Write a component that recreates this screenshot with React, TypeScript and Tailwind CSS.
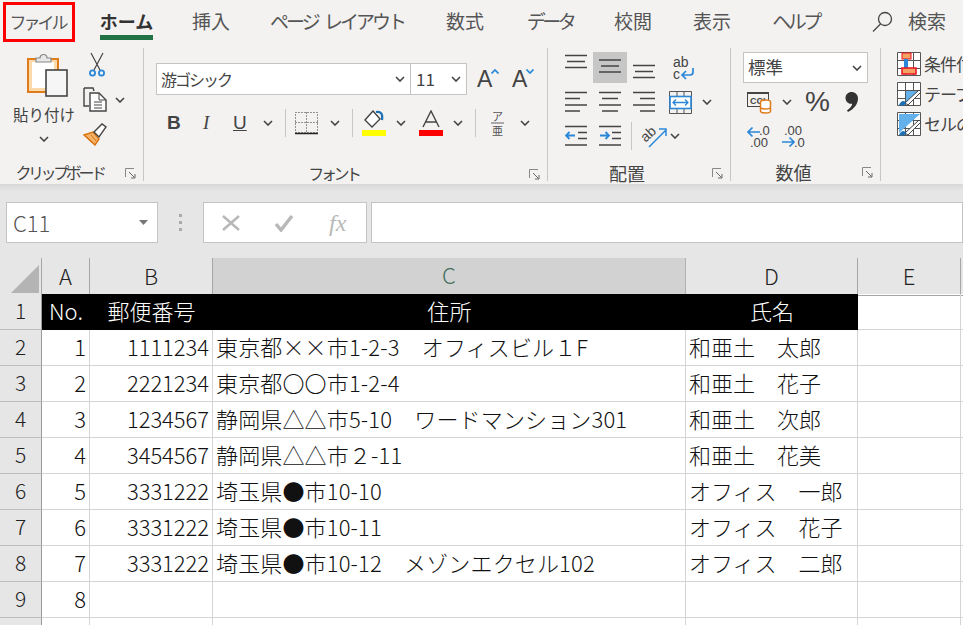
import React from "react";

const jp = '"Noto Sans CJK JP", "Noto Sans", sans-serif';

function Chev({ className = "" }: { className?: string }) {
  return (
    <svg width="10" height="6" viewBox="0 0 10 6" className={`shrink-0 ${className}`}>
      <path d="M1 1l4 4 4-4" fill="none" stroke="#444" strokeWidth="1.6" />
    </svg>
  );
}

function Sep({ h = 28 }: { h?: number }) {
  return <div className="w-px bg-[#c8c6c4]" style={{ height: h }} />;
}

function Launcher() {
  return (
    <svg width="11" height="11" viewBox="0 0 11 11">
      <path d="M.5 9V.5H9" fill="none" stroke="#8a8886" />
      <path d="M4 4l5.5 5.5M10 6v4H6" fill="none" stroke="#666" />
    </svg>
  );
}

function GroupLabel({ text, kanji = false, w }: { text: string; kanji?: boolean; w: number }) {
  return (
    <div className="flex items-center h-[22px] relative pr-[24px]" style={{ width: w }}>
      <span className={`w-full text-center whitespace-nowrap text-[#444] ${kanji ? "text-[18px]" : "text-[16px] tracking-[-3.400px] -mt-[2px]"}`}>{text}</span>
      <span className="absolute right-[7px] top-[6px] flex">
        <Launcher />
      </span>
    </div>
  );
}

function VLines({ ys }: { ys: number[] }) {
  return (
    <svg width="22" height="31" viewBox="0 0 22 31" className="shrink-0">
      <path d={`M0 ${ys[0]}H22M2 ${ys[1]}H20M0 ${ys[2]}H22`} stroke="#444" strokeWidth="1.4" fill="none" />
    </svg>
  );
}

function HLines({ kind }: { kind: "left" | "center" | "right" }) {
  const [a, b] = kind === "left" ? [0, 15] : kind === "center" ? [3, 19] : [7, 22];
  return (
    <svg width="22" height="22" viewBox="0 0 22 22" className="shrink-0">
      <path d={`M0 1.5H22M${a} 7.5H${b}M0 14H22M${a} 20H${b}`} stroke="#444" strokeWidth="1.4" fill="none" />
    </svg>
  );
}

function Paste() {
  return (
    <svg width="44" height="46" viewBox="0 0 44 46">
      <rect x="2" y="7" width="30" height="33" fill="#fbd9a8" stroke="#e07b1a" strokeWidth="2" />
      <rect x="6" y="10" width="22" height="26" fill="#fff" />
      <path d="M10 10V6h4a3.500 3.500 0 0 1 7 0h4v4z" fill="#e8e8e8" stroke="#888" strokeWidth="1.2" />
      <rect x="20" y="18" width="21" height="26" fill="#f6f6f6" stroke="#444" strokeWidth="1.6" />
    </svg>
  );
}

function Scissors() {
  return (
    <svg width="18" height="26" viewBox="0 0 18 26">
      <path d="M3 1l9 17M15 1L6 18" stroke="#444" strokeWidth="1.2" fill="none" />
      <circle cx="4.500" cy="21" r="2.600" fill="none" stroke="#2b88d8" strokeWidth="1.800" />
      <circle cx="13.500" cy="21" r="2.600" fill="none" stroke="#2b88d8" strokeWidth="1.800" />
    </svg>
  );
}

function Copy() {
  return (
    <svg width="25" height="25" viewBox="0 0 25 25">
      <path d="M1 1h9l1 3M1 1v18h5" fill="none" stroke="#444" strokeWidth="1.400" />
      <path d="M7 6h9l7 7v11H7z" fill="#fff" stroke="#444" strokeWidth="1.400" />
      <path d="M16 6v7h7M11 15h8M11 18h8M11 21h8" fill="none" stroke="#444" />
    </svg>
  );
}

function Brush() {
  return (
    <svg width="25" height="23" viewBox="0 0 25 23">
      <path d="M1 12l9-3 6 7-4 6z" fill="#f4b26a" stroke="#d9730d" strokeWidth="1.400" />
      <path d="M11 9l8-8 4 3-7 10z" fill="#fff" stroke="#444" strokeWidth="1.400" />
      <path d="M4 14l5 6M8 12l5 6" stroke="#d9730d" />
    </svg>
  );
}

function GrowFont({ up }: { up: boolean }) {
  return (
    <div className="flex items-start w-[21px] h-[26px]">
      <span className="text-[23px] leading-[26px] text-[#444]" style={{ fontFamily: '"Liberation Sans", sans-serif' }}>A</span>
      <svg width="8" height="5" viewBox="0 0 8 5" className="mt-[3px] -ml-px shrink-0">
        <path d={up ? "M0.500 4.500L4 1l3.500 3.500" : "M0.500 0.500L4 4l3.500-3.500"} stroke="#2b88d8" strokeWidth="1.700" fill="none" />
      </svg>
    </div>
  );
}

function Borders() {
  return (
    <svg width="23" height="24" viewBox="0 0 23 24">
      <path d="M.5 1.500h22v20H.5zM11.500 1.500v20M.5 11.500h22" fill="none" stroke="#333" strokeDasharray="1 2" />
      <path d="M0 22.500h23" stroke="#222" strokeWidth="1.500" />
    </svg>
  );
}

function Fill() {
  return (
    <svg width="25" height="26" viewBox="0 0 25 26">
      <path d="M11 1l-8 9 7 7 8-8z" fill="#fff" stroke="#444" strokeWidth="1.400" />
      <path d="M14 2c5-1 7 2 6 8" fill="none" stroke="#1a6fb5" strokeWidth="2.200" />
      <rect x="0" y="20" width="24" height="6" fill="#ffff00" />
    </svg>
  );
}

function FontColor() {
  return (
    <svg width="25" height="26" viewBox="0 0 25 26">
      <path d="M4 17L12 1l8 16M7 12h10" fill="none" stroke="#444" strokeWidth="1.400" />
      <rect x="0" y="20" width="24" height="6" fill="#ff0000" />
    </svg>
  );
}

function Ruby() {
  return (
    <div className="flex flex-col items-center w-[13px] text-[#555] text-[11px] leading-[11px]">
      <span>ア</span>
      <span className="w-full h-[2px] bg-[#aaa]" />
      <span className="mt-[1px]">亜</span>
    </div>
  );
}

function Indent({ right }: { right: boolean }) {
  return (
    <svg width="23" height="22" viewBox="0 0 23 22" className="shrink-0">
      <path d="M0 1.500h22M13 7.500h9M13 13.500h9M0 20h22" stroke="#444" strokeWidth="1.400" />
      {right ? (
        <path d="M1 10.500h9M6.500 7l3.500 3.500L6.500 14" fill="none" stroke="#2b88d8" strokeWidth="1.800" />
      ) : (
        <path d="M10 10.500H1M4.500 7L1 10.500 4.500 14" fill="none" stroke="#2b88d8" strokeWidth="1.800" />
      )}
    </svg>
  );
}

function Wrap() {
  return (
    <svg width="23" height="24" viewBox="0 0 23 24" className="shrink-0" style={{ fontFamily: '"Liberation Sans", sans-serif' }}>
      <text x="1" y="11" fontSize="14" fill="#444">ab</text>
      <text x="1" y="23" fontSize="14" fill="#444">c</text>
      <path d="M21 12v4a3 3 0 0 1-3 3h-7M14 15l-4 4 4 4" fill="none" stroke="#2b88d8" strokeWidth="1.700" />
    </svg>
  );
}

function Merge() {
  return (
    <svg width="23" height="23" viewBox="0 0 23 23" className="shrink-0">
      <path d="M.5.500h22v22H.5zM8 0v6M15 0v6M8 17v6M15 17v6" fill="none" stroke="#555" />
      <rect x="1" y="5.500" width="21" height="12" fill="#fff" stroke="#2b88d8" strokeWidth="1.600" />
      <path d="M4 11.500h15M7 8.500l-3 3 3 3M16 8.500l3 3-3 3" fill="none" stroke="#2b88d8" strokeWidth="1.300" />
    </svg>
  );
}

function Orient() {
  return (
    <svg width="26" height="24" viewBox="0 0 26 24" className="shrink-0" style={{ fontFamily: '"Liberation Sans", sans-serif' }}>
      <text x="0" y="15" fontSize="14" fill="#444" transform="rotate(-42 7 11)">ab</text>
      <path d="M8 23L25 6M18 5h7v7" fill="none" stroke="#2b88d8" strokeWidth="1.500" />
    </svg>
  );
}

function Acct() {
  return (
    <svg width="25" height="24" viewBox="0 0 25 24" className="shrink-0" style={{ fontFamily: '"Liberation Sans", sans-serif' }}>
      <rect x="0.500" y="2.500" width="21" height="14" fill="#f3f2f1" stroke="#444" />
      <rect x="0" y="2" width="22" height="2" fill="#444" />
      <text x="3" y="13.500" fontSize="9" fontWeight="bold" fill="#444">CCI</text>
      <ellipse cx="18.500" cy="12" rx="5" ry="2" fill="#fff" stroke="#e07b1a" strokeWidth="1.500" />
      <path d="M13.500 12v9c0 1 2 2 5 2s5-1 5-2v-9M13.500 17c0 1 2 2 5 2s5-1 5-2" fill="#fff" stroke="#e07b1a" strokeWidth="1.500" />
    </svg>
  );
}

function Comma() {
  return (
    <svg width="13" height="20" viewBox="0 0 13 20" className="shrink-0">
      <path d="M6.500 0C10 0 13 2.500 13 6.500 13 12 9 17 3 20L2 18.500c3-2 5-4.500 5.200-6.700C3.500 12.300 0.500 9.500 0.500 6 0.500 2.500 3.200 0 6.500 0z" fill="#333" />
    </svg>
  );
}

function Decimal({ inc }: { inc: boolean }) {
  return (
    <svg width="24" height="22" viewBox="0 0 24 22" className="shrink-0" style={{ fontFamily: '"Liberation Sans", sans-serif' }}>
      {inc ? (
        <>
          <path d="M13 7H1M5.500 2.500L1 7l4.500 4.500" fill="none" stroke="#2b88d8" strokeWidth="1.700" />
          <text x="12" y="10" fontSize="13" fill="#444">.0</text>
          <text x="3" y="22" fontSize="13" fill="#444">.00</text>
        </>
      ) : (
        <>
          <text x="3" y="10" fontSize="13" fill="#444">.00</text>
          <path d="M1 17h12M8.500 12.500L13 17l-4.500 4.500" fill="none" stroke="#2b88d8" strokeWidth="1.700" />
          <text x="13" y="22" fontSize="13" fill="#444">.0</text>
        </>
      )}
    </svg>
  );
}

function CondIcon({ variant }: { variant: number }) {
  return (
    <svg width="24" height="24" viewBox="0 0 24 24" className="shrink-0">
      <path d="M.5.500h23v23H.5zM.5 8.500h23M.5 16.500h23M8.500.500v23M16.500.500v23" fill="#fff" stroke="#555" />
      {variant === 0 ? (
        <>
          <rect x="5" y="1" width="9" height="6" fill="#f4a261" stroke="#e81123" />
          <rect x="7" y="7" width="4" height="11" fill="#2b88d8" />
          <rect x="5" y="16" width="14" height="6" fill="#f4a261" stroke="#e81123" strokeWidth="1.500" />
        </>
      ) : (
        <>
          <path d={variant === 1 ? "M9 9h14L9 21z" : "M2 2h21L2 21z"} fill="#63b0ea" />
          <path d="M8 21l14-13 2 2-13 13z" fill="#fff" stroke="#444" />
          <path d="M2 23c2-5 6-5 7-2-1 3-5 3-7 2z" fill="#1a6fb5" />
        </>
      )}
    </svg>
  );
}

function Tab({ children, ml, bold = false, w }: { children: React.ReactNode; ml: number; bold?: boolean; w: number }) {
  return (
    <div className="relative flex flex-col items-center h-[44px] shrink-0" style={{ marginLeft: ml, width: w }}>
      <span className={`leading-[42px] whitespace-nowrap ${bold ? "text-[18px] font-bold text-[#333]" : "text-[19px] text-[#555]"}`}>{children}</span>
      {bold && <span className="absolute top-[35px] left-0 right-0 h-[5px] bg-[#217346]" />}
    </div>
  );
}

function Ribbon() {
  return (
    <div className="h-[140px] flex">
      {/* clipboard */}
      <div className="w-[143px] flex flex-col shrink-0 pt-[8px]">
        <div className="h-[106px] flex">
          <div className="w-[88px] flex flex-col items-center shrink-0">
            <div className="ml-[7px] h-[46px]"><Paste /></div>
            <span className="text-[15.500px] leading-[20px] mt-[6px] text-[#444] whitespace-nowrap">貼り付け</span>
            <Chev className="mt-[12px]" />
          </div>
          <div className="flex flex-col -ml-[5px]">
            <div className="ml-[5px] h-[26px]"><Scissors /></div>
            <div className="flex items-center mt-[9px]"><Copy /><Chev className="ml-[7px]" /></div>
            <div className="mt-[11px]"><Brush /></div>
          </div>
        </div>
        <div className="mt-[8px]"><GroupLabel text="クリップボード" w={143} /></div>
      </div>
      <div className="w-px h-[133px] mt-[4px] bg-[#c8c6c4] shrink-0" />
      {/* font */}
      <div className="w-[403px] flex flex-col shrink-0 pt-[19px]">
        <div className="flex items-center h-[32px] pl-[12px]">
          <div className="w-[255px] h-[32px] border-[1.500px] border-[#c4c4c4] bg-white flex items-center justify-between pl-[4px] pr-[5px]">
            <span className="text-[16px] text-[#444] tracking-[-2px]">游ゴシック</span>
            <Chev />
          </div>
          <div className="w-[57px] h-[32px] -ml-px border-[1.500px] border-[#c4c4c4] bg-white flex items-center justify-between pl-[5px] pr-[5px]">
            <span className="text-[17px] text-[#444]">11</span>
            <Chev />
          </div>
          <div className="ml-[10px]"><GrowFont up /></div>
          <div className="ml-[14px]"><GrowFont up={false} /></div>
        </div>
        <div className="flex items-center h-[30px] mt-[14px]">
          <span className="ml-[23px] w-[12px] text-[19px] font-bold text-[#444]" style={{ fontFamily: '"Liberation Sans", sans-serif' }}>B</span>
          <span className="ml-[24px] w-[10px] text-[19px] italic text-[#444]" style={{ fontFamily: '"Liberation Serif", serif' }}>I</span>
          <span className="ml-[20px] w-[14px] text-[19px] underline text-[#444]" style={{ fontFamily: '"Liberation Sans", sans-serif' }}>U</span>
          <Chev className="ml-[16px]" />
          <div className="ml-[12px]"><Sep /></div>
          <div className="ml-[9px] flex"><Borders /></div>
          <Chev className="ml-[12px]" />
          <div className="ml-[12px]"><Sep /></div>
          <div className="ml-[9px] flex"><Fill /></div>
          <Chev className="ml-[9px]" />
          <div className="ml-[13px] flex"><FontColor /></div>
          <Chev className="ml-[9px]" />
          <div className="ml-[12px]"><Sep /></div>
          <div className="ml-[15px] flex"><Ruby /></div>
          <Chev className="ml-[16px]" />
        </div>
        <div className="mt-[25px]"><GroupLabel text="フォント" w={403} /></div>
      </div>
      <div className="w-px h-[133px] mt-[4px] bg-[#c8c6c4] shrink-0" />
      {/* align */}
      <div className="w-[182px] flex flex-col shrink-0 pt-[8px]">
        <div className="flex items-center h-[31px] pl-[17px]">
          <VLines ys={[3.5, 9.5, 15.5]} />
          <div className="ml-[6px] w-[34px] h-[31px] bg-[#c6c6c6] flex items-center justify-center"><VLines ys={[8, 14, 20]} /></div>
          <div className="ml-[6px] flex"><VLines ys={[13.5, 19.5, 25.5]} /></div>
          <div className="ml-[17px] flex"><Wrap /></div>
        </div>
        <div className="flex items-center h-[24px] mt-[7px] pl-[17px]">
          <HLines kind="left" />
          <div className="ml-[12px] flex"><HLines kind="center" /></div>
          <div className="ml-[12px] flex"><HLines kind="right" /></div>
          <div className="ml-[14px] flex"><Merge /></div>
          <Chev className="ml-[10px]" />
        </div>
        <div className="flex items-center h-[24px] mt-[10px] pl-[17px]">
          <Indent right={false} />
          <div className="ml-[11px] flex"><Indent right /></div>
          <div className="ml-[9px]"><Sep h={28} /></div>
          <div className="ml-[9px] flex"><Orient /></div>
          <Chev className="ml-[3px]" />
        </div>
        <div className="mt-[14px]"><GroupLabel text="配置" kanji w={182} /></div>
      </div>
      <div className="w-px h-[133px] mt-[4px] bg-[#c8c6c4] shrink-0" />
      {/* number */}
      <div className="w-[149px] flex flex-col shrink-0 pt-[8px]">
        <div className="ml-[12px] w-[125px] h-[31px] border-[1.500px] border-[#c4c4c4] bg-white flex items-center justify-between pl-[4px] pr-[5px]">
          <span className="text-[17.500px] text-[#444]">標準</span>
          <Chev />
        </div>
        <div className="flex items-center h-[26px] mt-[6px] pl-[16px]">
          <Acct />
          <Chev className="ml-[10px]" />
          <span className="ml-[13px] text-[28px] leading-[26px] text-[#444]" style={{ fontFamily: '"Liberation Sans", sans-serif' }}>%</span>
          <div className="ml-[15px] flex"><Comma /></div>
        </div>
        <div className="flex items-center h-[24px] mt-[9px] pl-[16px]">
          <Decimal inc />
          <div className="ml-[10px] flex"><Decimal inc={false} /></div>
        </div>
        <div className="mt-[13px]"><GroupLabel text="数値" kanji w={149} /></div>
      </div>
      <div className="w-px h-[133px] mt-[4px] bg-[#c8c6c4] shrink-0" />
      {/* styles */}
      <div className="flex-1 min-w-0 overflow-hidden flex flex-col pl-[16px] pt-[8px] gap-[6px]">
        {["条件付き書式", "テーブルとして", "セルのスタイル"].map((t, i) => (
          <div key={t} className="flex items-center h-[24px] gap-[3px] whitespace-nowrap">
            <CondIcon variant={i} />
            <span className="text-[17px] text-[#444] tracking-[-1px]">{t}</span>
          </div>
        ))}
      </div>
    </div>
  );
}

const rows: [string, string, string, string, string][] = [
  ["1", "No.", "郵便番号", "住所", "氏名"],
  ["2", "1", "1111234", "東京都××市1-2-3　オフィスビル１F", "和亜土　太郎"],
  ["3", "2", "2221234", "東京都〇〇市1-2-4", "和亜土　花子"],
  ["4", "3", "1234567", "静岡県△△市5-10　ワードマンション301", "和亜土　次郎"],
  ["5", "4", "3454567", "静岡県△△市２-11", "和亜土　花美"],
  ["6", "5", "3331222", "埼玉県●市10-10", "オフィス　一郎"],
  ["7", "6", "3331222", "埼玉県●市10-11", "オフィス　花子"],
  ["8", "7", "3331222", "埼玉県●市10-12　メゾンエクセル102", "オフィス　二郎"],
  ["9", "8", "", "", ""],
  ["10", "", "", "", ""],
];

const cols = "grid grid-cols-[42px_48px_123px_473px_172px_103px_1fr]";

function Sheet() {
  return (
    <div className="bg-white">
      <div className={`${cols} h-[36px] bg-[#e6e6e6] text-[#222]`}>
        <div className="border-r border-b border-[#a6a6a6] flex items-end justify-end pr-[2px] pb-[2px]">
          <svg width="28" height="28" viewBox="0 0 28 28"><path d="M28 0v28H0z" fill="#b4b4b4" /></svg>
        </div>
        {["A", "B", "C", "D", "E"].map((c) => (
          <div
            key={c}
            className={`flex items-center justify-center text-[22px] font-light pb-[3px] border-r ${c === "C" ? "bg-[#d2d2d2] border-b-2 border-b-[#217346] border-r-[#b0b0b0] text-[#3f6e5a]" : "border-b border-[#a6a6a6]"}`}
          >
            {c}
          </div>
        ))}
        <div className="border-b border-[#a6a6a6]" />
      </div>
      {rows.map((r) => {
        const head = r[0] === "1";
        const cell = `h-[36px] pb-[3px] flex items-center text-[22px] font-light whitespace-nowrap overflow-hidden border-b ${head ? "bg-black text-white border-black" : "text-[#111] border-r border-[#d4d4d4]"}`;
        return (
          <div key={r[0]} className={cols}>
            <div className="h-[36px] pb-[2px] bg-[#e6e6e6] border-r border-r-[#9a9a9a] border-b border-b-[#bdbdbd] flex items-center justify-center text-[21px] font-light text-[#222]">{r[0]}</div>
            <div className={`${cell} ${head ? "justify-center" : "justify-end pr-[3px]"}`}>{r[1]}</div>
            <div className={`${cell} tracking-[-0.050px] ${head ? "justify-center" : "justify-end pr-[3px]"}`}>{r[2]}</div>
            <div className={`${cell} tracking-[0.150px] ${head ? "justify-center" : "pl-[3px]"}`}>{r[3]}</div>
            <div className={`${cell} ${head ? "justify-center" : "pl-[3px]"}`}>{r[4]}</div>
            <div className="h-[36px] border-r border-b border-[#d4d4d4]" />
            <div className="h-[36px] border-b border-[#d4d4d4]" />
          </div>
        );
      })}
    </div>
  );
}

export default function App() {
  return (
    <div className="w-[963px] h-[625px] overflow-hidden bg-[#e6e6e6]" style={{ fontFamily: jp }}>
      <div className="bg-[#f3f2f1] h-[184px]">
        <div className="flex h-[44px]">
          <div className="mt-[2px] ml-[3px] w-[72px] h-[40px] border-[3px] border-[#ff0000] flex items-center justify-center pr-[3px] text-[17px] tracking-[-3px] text-[#555] shrink-0 whitespace-nowrap">ファイル</div>
          <Tab ml={25} w={53} bold>ホーム</Tab>
          <Tab ml={39} w={38}>挿入</Tab>
          <Tab ml={42} w={130}>
            <span className="tracking-[-3px] [word-spacing:5px]">ページ レイアウト</span>
          </Tab>
          <Tab ml={44} w={38}>数式</Tab>
          <Tab ml={42} w={48}><span className="tracking-[-3.500px]">データ</span></Tab>
          <Tab ml={40} w={38}>校閲</Tab>
          <Tab ml={41} w={38}>表示</Tab>
          <Tab ml={41} w={47}><span className="tracking-[-3.500px]">ヘルプ</span></Tab>
          <div className="ml-[53px] h-[42px] flex items-center shrink-0">
            <svg width="21" height="21" viewBox="0 0 21 21">
              <circle cx="13" cy="8" r="6.500" fill="none" stroke="#444" strokeWidth="1.300" />
              <path d="M8.500 13L1 20.500" stroke="#444" strokeWidth="1.300" />
            </svg>
          </div>
          <span className="ml-[15px] text-[19px] leading-[42px] text-[#555] whitespace-nowrap">検索</span>
        </div>
        <Ribbon />
      </div>
      <div className="h-[74px] bg-gradient-to-b from-[#d8d8d8] to-[#e6e6e6] from-0% to-[10%] pt-[18px] flex items-start">
        <div className="ml-[6px] w-[152px] h-[41px] bg-white border border-[#c4c4c4] flex items-center justify-between pl-[6px] pr-[9px] shrink-0">
          <span className="text-[22px] font-light text-[#555]">C11</span>
          <svg width="9" height="5" viewBox="0 0 9 5"><path d="M0 0h9L4.500 5z" fill="#777" /></svg>
        </div>
        <div className="ml-[21px] mt-[12px] flex flex-col gap-[4px] shrink-0">
          <span className="w-[3px] h-[3px] bg-[#aaa]" />
          <span className="w-[3px] h-[3px] bg-[#aaa]" />
          <span className="w-[3px] h-[3px] bg-[#aaa]" />
        </div>
        <div className="ml-[21px] w-[164px] h-[41px] bg-white border border-[#c4c4c4] flex items-center shrink-0">
          <svg width="18" height="16" viewBox="0 0 18 16" className="ml-[18px] shrink-0"><path d="M1 1l16 14M17 1L1 15" stroke="#b8b8b8" strokeWidth="2.500" /></svg>
          <svg width="20" height="18" viewBox="0 0 20 18" className="ml-[34px] shrink-0"><path d="M2 10l5 6L18 2" fill="none" stroke="#b8b8b8" strokeWidth="3.500" /></svg>
          <span className="ml-[35px] text-[24px] italic text-[#b8b8b8]" style={{ fontFamily: '"Liberation Serif", serif' }}>fx</span>
        </div>
        <div className="ml-[4px] flex-1 h-[41px] bg-white border border-[#c4c4c4]" />
      </div>
      <Sheet />
    </div>
  );
}
